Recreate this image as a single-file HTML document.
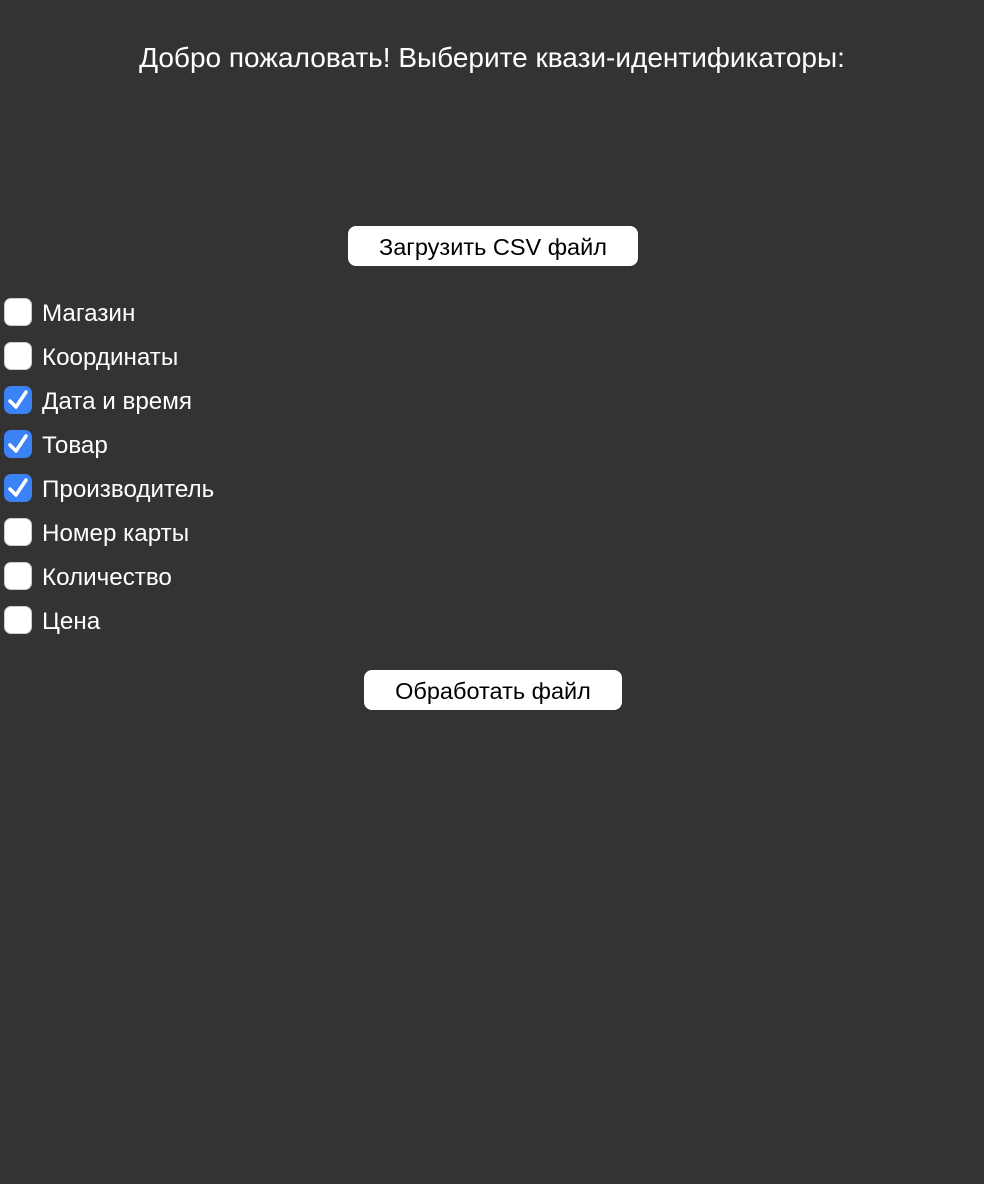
<!DOCTYPE html>
<html><head><meta charset="utf-8"><style>
body{margin:0;background:#333;width:984px;height:1184px;font-family:"Liberation Sans",Arial,sans-serif;color:#fff;position:relative;overflow:hidden}
h1{position:absolute;top:40px;left:0;width:984px;margin:0;text-align:center;font-weight:normal;font-size:28px;line-height:36px}
.btn{position:absolute;background:#fff;color:#000;border-radius:8px;height:40px;line-height:42px;text-align:center;font-size:23.5px}
.row{position:absolute;left:4px;height:28px;display:flex;align-items:center}
.cb{width:28px;height:28px;border-radius:7px;background:#fff;box-sizing:border-box;border:1px solid #ccc;margin-right:10px;position:relative;flex:none}
.on{background:#3b82f6;border-color:#3b82f6}
.on svg{position:absolute;left:2px;top:2px}
.t{font-size:24.2px;position:relative;top:2px}
</style></head><body>
<h1>Добро пожаловать! Выберите квази-идентификаторы:</h1>
<div class="btn" style="left:348px;top:226px;width:290px">Загрузить CSV файл</div>
<div class="row" style="top:298px"><div class="cb"></div><span class="t">Магазин</span></div>
<div class="row" style="top:342px"><div class="cb"></div><span class="t">Координаты</span></div>
<div class="row" style="top:386px"><div class="cb on"><svg width="22" height="22" viewBox="0 0 22 22"><path d="M3 12 L9 18 L19 3" stroke="#fff" stroke-width="3.5" fill="none" stroke-linecap="round" stroke-linejoin="round"/></svg></div><span class="t">Дата и время</span></div>
<div class="row" style="top:430px"><div class="cb on"><svg width="22" height="22" viewBox="0 0 22 22"><path d="M3 12 L9 18 L19 3" stroke="#fff" stroke-width="3.5" fill="none" stroke-linecap="round" stroke-linejoin="round"/></svg></div><span class="t">Товар</span></div>
<div class="row" style="top:474px"><div class="cb on"><svg width="22" height="22" viewBox="0 0 22 22"><path d="M3 12 L9 18 L19 3" stroke="#fff" stroke-width="3.5" fill="none" stroke-linecap="round" stroke-linejoin="round"/></svg></div><span class="t">Производитель</span></div>
<div class="row" style="top:518px"><div class="cb"></div><span class="t">Номер карты</span></div>
<div class="row" style="top:562px"><div class="cb"></div><span class="t">Количество</span></div>
<div class="row" style="top:606px"><div class="cb"></div><span class="t">Цена</span></div>
<div class="btn" style="left:364px;top:670px;width:258px">Обработать файл</div>
</body></html>
